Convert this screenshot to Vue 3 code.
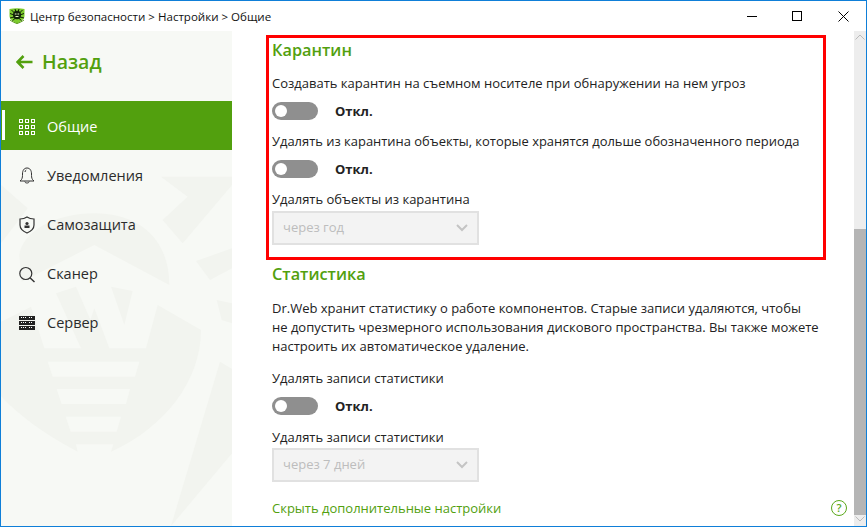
<script setup>
const items = [
  { id: 'grid', label: 'Общие', active: true },
  { id: 'bell', label: 'Уведомления' },
  { id: 'shield', label: 'Самозащита' },
  { id: 'search', label: 'Сканер' },
  { id: 'server', label: 'Сервер' },
]
const gridCells = []
for (let r = 0; r < 3; r++) for (let c = 0; c < 3; c++) gridCells.push({ x: 0.5 + c * 6, y: 1.5 + r * 6, k: r + '-' + c })
const rows = [2, 7, 12]
</script>

<template>
  <div class="window">
    <header class="titlebar">
      <div class="title-left">
        <svg class="logo" width="16" height="16" viewBox="0 0 16 16">
          <path d="M0.500 1 C5 0 11 0 15.500 1 L15.500 8 C15.500 11.500 11 14 8 15.500 C5 14 0.500 11.500 0.500 8 Z" fill="#7ccb2c" />
          <path d="M1 12 C3 13.500 6 15 8 15.500 C10 15 13 13.500 15 12" fill="none" stroke="#5a9a1c" />
          <ellipse cx="8" cy="7" rx="4" ry="4.200" fill="#12200a" />
          <path d="M5.500 5 L2.500 2 M10.500 5 L13.500 2 M5 7 L1 5.500 M11 7 L15 5.500 M5 9 L1 10 M11 9 L15 10 M6 10.500 L3.500 12.500 M10 10.500 L12.500 12.500 M7 4 L6 1 M9 4 L10 1" stroke="#12200a" stroke-width="1" fill="none" />
          <path d="M5.800 6H7.500M8.500 6H10.200M6.500 8.500H9.500" stroke="#e4f5c4" stroke-width="1" fill="none" />
        </svg>
        <span class="title-text">Центр безопасности &gt; Настройки &gt; Общие</span>
      </div>
      <div class="win-controls">
        <svg width="11" height="11" viewBox="0 0 11 11"><path d="M0 5.500H10" stroke="#000" stroke-width="1" /></svg>
        <svg width="11" height="11" viewBox="0 0 11 11"><rect x="0.500" y="0.500" width="9" height="9" fill="none" stroke="#000" /></svg>
        <svg width="11" height="11" viewBox="0 0 11 11"><path d="M0.500 0.500L10.500 10.500M10.500 0.500L0.500 10.500" stroke="#000" stroke-width="1" /></svg>
      </div>
    </header>

    <div class="body">
      <aside class="sidebar">
        <svg class="watermark" width="231" height="495" viewBox="0 0 693 1485">
          <g fill="#f2f4ef">
            <path d="M55 672 C65 600 165 547 280 547 C410 547 505 620 505 762 L280 642 L62 752 Z" />
            <path d="M165 787 L225 767 L275 882 L240 952 Z" />
            <path d="M330 767 L395 780 L370 882 Z" />
            <path d="M0 872 L90 827 L130 952 L240 952 L280 832 L325 952 L435 952 L470 822 L600 897 C600 1050 490 1190 330 1262 L337 1240 L225 1240 L230 1262 C130 1210 50 1150 0 1095 Z" />
            <path d="M657 992 L693 1014 L693 1267 L510 1485 Z" />
            <path d="M480 437 L560 497 L485 567 L545 637 L693 462 L693 437 Z" />
            <path d="M0 462 L80 532 L0 637 Z" />
            <path d="M585 690 L693 652 L693 712 L627 747 Z" />
            <path d="M647 807 L693 817 L693 877 L662 867 Z" />
          </g>
          <g fill="#f7f9f5">
            <path d="M140 992 H415 L402 1037 H155 Z" />
            <path d="M167 1074 H387 L375 1119 H182 Z" />
            <path d="M194 1157 H360 L347 1202 H209 Z" />
          </g>
        </svg>
        <a class="back">
          <svg width="17" height="14" viewBox="0 0 17 14"><path d="M7.500 1L1.600 7L7.500 13M2 7H16.500" fill="none" stroke="#52a00e" stroke-width="2.600" /></svg>
          <span>Назад</span>
        </a>
        <nav class="menu">
          <div v-for="it in items" :key="it.id" class="item" :class="{ active: it.active }">
            <span class="marker"></span>
            <svg class="icon" width="18" height="18" viewBox="0 0 18 18" :stroke="it.active ? '#fff' : '#333'" fill="none">
              <template v-if="it.id === 'grid'">
                <rect v-for="c in gridCells" :key="c.k" :x="c.x" :y="c.y" width="3" height="3" />
              </template>
              <template v-else-if="it.id === 'bell'">
                <path d="M2.500 12.500C3.500 11 3.500 9 3.500 7C3.500 3.500 5 1 8 1C11 1 12.500 3.500 12.500 7C12.500 9 12.500 11 13.500 12.500L15 14H1Z" />
                <path d="M5.800 14.500C6 16.500 10 16.500 10.200 14.500M6 5C6 4 6.500 3.300 7.300 3" />
              </template>
              <template v-else-if="it.id === 'shield'">
                <path d="M8 1C10 2.400 12 3 15 3V9C15 12.500 11.500 15.500 8 17C4.500 15.500 1 12.500 1 9V3C4 3 6 2.400 8 1Z" stroke-width="1.200" />
                <circle cx="8" cy="7.500" r="1.600" fill="#333" stroke="none" />
                <rect x="5.500" y="9.500" width="5" height="2.500" fill="#333" stroke="none" />
              </template>
              <template v-else-if="it.id === 'search'">
                <circle cx="6.800" cy="8.500" r="6" stroke-width="1.200" />
                <path d="M11.200 13L15.500 17" stroke-width="1.500" />
              </template>
              <template v-else>
                <rect v-for="y in rows" :key="y" x="0" :y="y" width="16" height="4" fill="#222" stroke="none" />
                <path v-for="y in rows" :key="'d' + y" :d="`M2 ${y + 1.500}H7M10 ${y + 1.500}H14`" stroke="#fff" stroke-width="1" stroke-dasharray="1 1" />
              </template>
            </svg>
            <span class="label">{{ it.label }}</span>
          </div>
        </nav>
      </aside>

      <main class="content">
        <section class="quarantine">
          <h2>Карантин</h2>
          <p class="opt q1">Создавать карантин на съемном носителе при обнаружении на нем угроз</p>
          <div class="toggle-row"><span class="toggle"><i></i></span><b>Откл.</b></div>
          <p class="opt q2">Удалять из карантина объекты, которые хранятся дольше обозначенного периода</p>
          <div class="toggle-row"><span class="toggle"><i></i></span><b>Откл.</b></div>
          <p class="opt q3">Удалять объекты из карантина</p>
          <div class="select"><span>через год</span><svg width="12" height="8" viewBox="0 0 12 8"><path d="M1 1L6 6L11 1" fill="none" stroke="#c4c4c4" stroke-width="2" /></svg></div>
        </section>

        <section class="stats">
          <h2>Статистика</h2>
          <p class="desc">Dr.Web хранит статистику о работе компонентов. Старые записи удаляются, чтобы<br />не допустить чрезмерного использования дискового пространства. Вы также можете<br />настроить их автоматическое удаление.</p>
          <p class="opt s1">Удалять записи статистики</p>
          <div class="toggle-row"><span class="toggle"><i></i></span><b>Откл.</b></div>
          <p class="opt s2">Удалять записи статистики</p>
          <div class="select"><span>через 7 дней</span><svg width="12" height="8" viewBox="0 0 12 8"><path d="M1 1L6 6L11 1" fill="none" stroke="#c4c4c4" stroke-width="2" /></svg></div>
          <a class="hide-link">Скрыть дополнительные настройки</a>
        </section>
      </main>

      <div class="scrollbar">
        <svg class="arrow" width="10" height="6" viewBox="0 0 10 6"><path d="M0.500 5.500L5 1L9.500 5.500" fill="none" stroke="#bbb" /></svg>
        <div class="thumb"></div>
        <svg class="arrow" width="10" height="6" viewBox="0 0 10 6"><path d="M0.500 0.500L5 5L9.500 0.500" fill="none" stroke="#bbb" /></svg>
      </div>
      <span class="help">?</span>
    </div>
  </div>
</template>

<style>
html, body { margin: 0; padding: 0; background: #fff; }
</style>

<style scoped>
.window {
  width: 867px;
  height: 527px;
  box-sizing: border-box;
  border: 1px solid #0f7fd8;
  display: flex;
  flex-direction: column;
  overflow: hidden;
  background: #fff;
  font-family: "Open Sans", "Noto Sans", sans-serif;
  color: #1c1c1c;
}
.titlebar {
  height: 30px;
  flex: none;
  display: flex;
  justify-content: space-between;
  align-items: center;
}
.title-left { display: flex; align-items: center; margin-left: 8px; gap: 5px; }
.logo { display: block; }
.title-text { font-size: 11.550px; color: #111; }
.win-controls { display: flex; gap: 34px; margin-right: 17px; align-items: center; }
.win-controls svg { display: block; }
.win-controls svg:last-child { margin-left: 1px; }
.body { flex: 1; display: flex; position: relative; min-height: 0; }
.sidebar { width: 231px; flex: none; background: #f7f9f5; position: relative; overflow: hidden; }
.watermark { position: absolute; left: 0; top: 0; display: block; }
.back {
  position: relative;
  height: 70px;
  box-sizing: border-box;
  padding: 0 0 9px 15px;
  display: flex;
  align-items: center;
  gap: 9px;
  color: #52a00e;
  font-size: 19.500px;
  font-weight: 600;
}
.menu { position: relative; display: flex; flex-direction: column; }
.item {
  height: 49px;
  display: flex;
  align-items: center;
  position: relative;
  color: #2b2b2b;
  font-size: 14.500px;
}
.item.active { background: #52a00e; color: #fff; }
.marker { position: absolute; left: 1px; top: 9px; width: 3px; height: 30px; background: transparent; }
.item.active .marker { background: #fff; }
.icon { margin: 3px 0 0 18px; display: block; flex: none; }
.label { margin-left: 10px; padding-top: 2px; }
.content { flex: 1; min-width: 0; padding-left: 40px; box-sizing: border-box; }
.quarantine {
  width: 560px;
  height: 225px;
  box-sizing: border-box;
  border: 3px solid #f00;
  margin: 4px 0 0 -6px;
  padding: 1px 0 0 3px;
}
h2 {
  margin: 0;
  font-size: 16.300px;
  font-weight: 600;
  color: #52a00e;
  line-height: 22px;
}
.opt, .desc { margin: 0; font-size: 13px; line-height: 18px; color: #222; }
.q1 { margin: 13px 0 1px; }
.q2 { margin: 3px 0 1px; font-size: 12.950px; }
.q3 { margin: 3px 0; }
.toggle-row { display: flex; align-items: center; height: 36px; }
.toggle {
  width: 46px;
  height: 18px;
  border-radius: 9px;
  background: #8f8f8f;
  position: relative;
  display: block;
}
.toggle i {
  position: absolute;
  left: 3px;
  top: 3px;
  width: 12px;
  height: 12px;
  border-radius: 50%;
  background: #fff;
}
.toggle-row b { margin-left: 17px; font-size: 13px; font-weight: 700; color: #222; }
.select {
  width: 207px;
  height: 34px;
  box-sizing: border-box;
  border: 2px solid #e1e1e1;
  background: #f3f3f3;
  display: flex;
  align-items: center;
  justify-content: space-between;
  padding: 0 9px;
  font-size: 13px;
  color: #bdbdbd;
}
.select span { margin-bottom: 2px; }
.stats { padding-top: 3px; }
.desc { margin-top: 14px; line-height: 19px; }
.s1 { margin: 13px 0 1px; }
.s2 { margin: 4px 0 2px; }
.hide-link { display: block; margin-top: 17px; font-size: 13px; line-height: 18px; color: #52a00e; }
.scrollbar {
  width: 12px;
  flex: none;
  background: #ededed;
  position: relative;
  display: flex;
  flex-direction: column;
  justify-content: space-between;
  align-items: center;
  padding: 3px 0 4px;
  box-sizing: border-box;
}
.scrollbar .arrow { position: relative; z-index: 1; display: block; }
.thumb {
  position: absolute;
  left: 0;
  right: 0;
  top: 198px;
  bottom: 11px;
  background: #b5b5b5;
}
.help {
  position: absolute;
  right: 19px;
  bottom: 10px;
  width: 16px;
  height: 16px;
  box-sizing: border-box;
  border: 1.500px solid #5aa81a;
  border-radius: 50%;
  color: #5aa81a;
  font-size: 11px;
  line-height: 13px;
  text-align: center;
  font-weight: 600;
}
</style>
